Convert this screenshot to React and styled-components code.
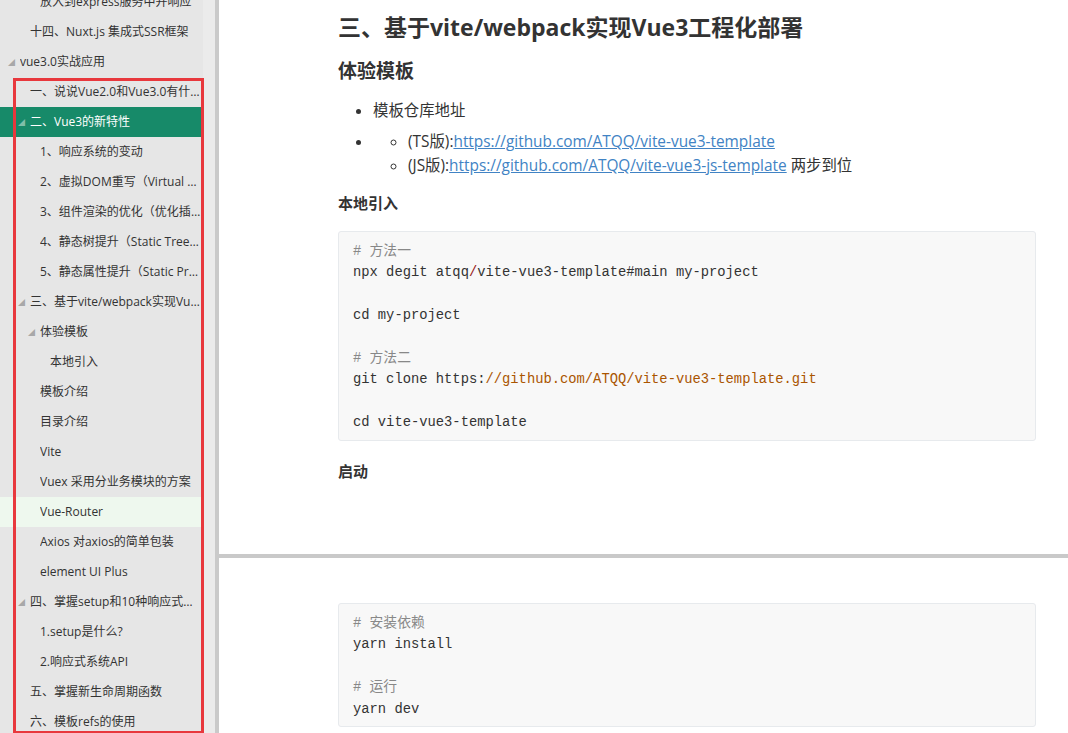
import React from "react";
import styled, { createGlobalStyle } from "styled-components";

const GlobalStyle = createGlobalStyle`
  html, body {
    margin: 0;
    padding: 0;
    background: #ffffff;
    overflow: hidden;
  }
  body {
    font-family: "Open Sans", "Noto Sans CJK SC", sans-serif;
    color: #333;
  }
`;

const tocItems = [
  { text: "放入到express服务中并响应", level: 2 },
  { text: "十四、Nuxt.js 集成式SSR框架", level: 1 },
  { text: "vue3.0实战应用", level: 0, open: true },
  { text: "一、说说Vue2.0和Vue3.0有什么区别", level: 1 },
  { text: "二、Vue3的新特性", level: 1, open: true, active: true },
  { text: "1、响应系统的变动", level: 2 },
  { text: "2、虚拟DOM重写（Virtual DOM）", level: 2 },
  { text: "3、组件渲染的优化（优化插槽生成）", level: 2 },
  { text: "4、静态树提升（Static Tree Hoisting）", level: 2 },
  { text: "5、静态属性提升（Static Props Hoisting）", level: 2 },
  { text: "三、基于vite/webpack实现Vue3工程化部署", level: 1, open: true },
  { text: "体验模板", level: 2, open: true },
  { text: "本地引入", level: 3 },
  { text: "模板介绍", level: 2 },
  { text: "目录介绍", level: 2 },
  { text: "Vite", level: 2 },
  { text: "Vuex 采用分业务模块的方案", level: 2 },
  { text: "Vue-Router", level: 2, hover: true },
  { text: "Axios 对axios的简单包装", level: 2 },
  { text: "element UI Plus", level: 2 },
  { text: "四、掌握setup和10种响应式系统API", level: 1, open: true },
  { text: "1.setup是什么?", level: 2 },
  { text: "2.响应式系统API", level: 2 },
  { text: "五、掌握新生命周期函数", level: 1 },
  { text: "六、模板refs的使用", level: 1 },
];

const App = () => {
  return (
    <>
      <GlobalStyle />
      <Layout>
        <Sidebar>
          <TocList>
            {tocItems.map((item, i) => (
              <TocRow
                key={i}
                $level={item.level}
                $open={item.open}
                $active={item.active}
                $hover={item.hover}
              >
                {item.open && <Caret $active={item.active}>◢</Caret>}
                <TocText>{item.text}</TocText>
              </TocRow>
            ))}
          </TocList>
          <Track />
          <Annotation />
        </Sidebar>

        <Main>
          <Page $height={554}>
            <H2>三、基于vite/webpack实现Vue3工程化部署</H2>
            <H3>体验模板</H3>
            <Bullets>
              <li>模板仓库地址</li>
              <li>
                <SubBullets>
                  <li>
                    (TS版):
                    <Link href="#">https://github.com/ATQQ/vite-vue3-template</Link>
                  </li>
                  <li>
                    (JS版):
                    <Link href="#">https://github.com/ATQQ/vite-vue3-js-template</Link> 两步到位
                  </li>
                </SubBullets>
              </li>
            </Bullets>
            <H4 $top={14}>本地引入</H4>
            <CodeBlock>
              <Comment># 方法一</Comment>
              {"\n"}npx degit atqq<Op>/</Op>vite-vue3-template#main my-project
              {"\n\n"}cd my-project
              {"\n\n"}<Comment># 方法二</Comment>
              {"\n"}git clone https:<Str>//github.com/ATQQ/vite-vue3-template.git</Str>
              {"\n\n"}cd vite-vue3-template
            </CodeBlock>
            <H4 $top={19}>启动</H4>
          </Page>
          <PageBreak />
          <Page $top={45}>
            <CodeBlock $top={0}>
              <Comment># 安装依赖</Comment>
              {"\n"}yarn install
              {"\n\n"}<Comment># 运行</Comment>
              {"\n"}yarn dev
            </CodeBlock>
          </Page>
        </Main>
      </Layout>
    </>
  );
};

export default App;

const Layout = styled.div`
  display: flex;
  width: 1068px;
  height: 733px;
  overflow: hidden;
`;

const Sidebar = styled.aside`
  position: relative;
  display: flex;
  flex: 0 0 215px;
  background: #e6e6e6;
  border-right: 4px solid #cacaca;
  overflow: hidden;
`;

const TocList = styled.div`
  width: 203px;
  margin-top: -13px;
  font-family: "Open Sans", "Noto Sans CJK SC", sans-serif;
  font-size: 12px;
`;

const TocRow = styled.div`
  display: flex;
  align-items: center;
  height: 30px;
  padding-left: ${(p) => (p.$open ? 8 + p.$level * 10 : 20 + p.$level * 10)}px;
  padding-right: 2px;
  color: ${(p) => (p.$active ? "#ffffff" : "#333333")};
  background: ${(p) =>
    p.$active ? "#178a69" : p.$hover ? "#eef8ee" : "transparent"};
`;

const Caret = styled.span`
  flex: 0 0 12px;
  font-size: 7px;
  line-height: 1;
  color: ${(p) => (p.$active ? "#7fbfa9" : "#a8a8a8")};
`;

const TocText = styled.span`
  flex: 1;
  min-width: 0;
  white-space: nowrap;
  overflow: hidden;
  text-overflow: ellipsis;
  line-height: 30px;
`;

const Track = styled.div`
  flex: 0 0 12px;
  background: #ebebeb;
`;

const Annotation = styled.div`
  position: absolute;
  left: 13px;
  top: 78px;
  width: 191px;
  height: 656px;
  box-sizing: border-box;
  border: 3px solid #e8383d;
  pointer-events: none;
`;

const Main = styled.main`
  flex: 1;
  display: flex;
  flex-direction: column;
  background: #ffffff;
`;

const Page = styled.section`
  box-sizing: border-box;
  height: ${(p) => (p.$height ? `${p.$height}px` : "auto")};
  flex: ${(p) => (p.$height ? "0 0 auto" : "1")};
  padding: ${(p) => p.$top || 12}px 32px 0 119px;
`;

const PageBreak = styled.div`
  flex: 0 0 4px;
  background: #c9c9c9;
`;

const H2 = styled.h2`
  margin: 0;
  font-size: 23px;
  line-height: 31px;
  font-weight: 700;
  color: #333;
`;

const H3 = styled.h3`
  margin: 14px 0 0;
  font-size: 19px;
  line-height: 28px;
  font-weight: 700;
  color: #333;
`;

const H4 = styled.h4`
  margin: ${(p) => p.$top || 15}px 0 0;
  font-size: 15px;
  line-height: 22px;
  font-weight: 700;
  color: #333;
`;

const Bullets = styled.ul`
  margin: 14px 0 0;
  padding-left: 35px;
  list-style: disc;
  font-size: 15.4px;
  line-height: 24px;
  color: #333;

  & > li + li {
    margin-top: 7px;
  }
`;

const SubBullets = styled.ul`
  margin: 0;
  padding-left: 35px;
  list-style: circle;
`;

const Link = styled.a`
  color: #4183c4;
  text-decoration: underline;
`;

const CodeBlock = styled.pre`
  margin: ${(p) => (p.$top === undefined ? 17 : p.$top)}px 0 0;
  padding: 9px 14px 6px;
  background: #f8f8f8;
  border: 1px solid #e7eaed;
  border-radius: 3px;
  font-family: "Liberation Mono", "Noto Sans CJK SC", monospace;
  font-size: 13.8px;
  line-height: 21.4px;
  color: #333;
  white-space: pre;
`;

const Comment = styled.span`
  color: #888;
`;

const Op = styled.span`
  color: #981a1a;
`;

const Str = styled.span`
  color: #aa5500;
`;
